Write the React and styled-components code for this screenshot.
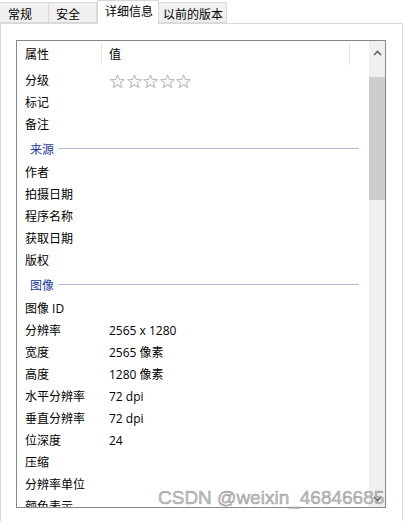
import React from "react";
import styled, { createGlobalStyle } from "styled-components";

const GlobalStyle = createGlobalStyle`
	html, body {
		margin: 0;
		padding: 0;
		background: #fff;
	}
	body {
		font-family: "Open Sans", "Noto Sans CJK SC", sans-serif;
		font-size: 12px;
		color: #000;
	}
`;

const tabs = [
	{ label: "常规", width: 49, pad: 8 },
	{ label: "安全", width: 48, pad: 7 },
	{ label: "详细信息", width: 62, pad: 7, active: true },
	{ label: "以前的版本", width: 68, pad: 4 },
];

const rows = [
	{ label: "分级", stars: true },
	{ label: "标记" },
	{ label: "备注" },
	{ group: "来源" },
	{ label: "作者" },
	{ label: "拍摄日期" },
	{ label: "程序名称" },
	{ label: "获取日期" },
	{ label: "版权" },
	{ group: "图像" },
	{ label: "图像 ID" },
	{ label: "分辨率", value: "2565 x 1280" },
	{ label: "宽度", value: "2565 像素" },
	{ label: "高度", value: "1280 像素" },
	{ label: "水平分辨率", value: "72 dpi" },
	{ label: "垂直分辨率", value: "72 dpi" },
	{ label: "位深度", value: "24" },
	{ label: "压缩" },
	{ label: "分辨率单位" },
	{ label: "颜色表示" },
];

function Star() {
	return (
		<svg width="15" height="15" viewBox="0 0 14 14">
			<polygon
				points="7,0.8 8.7,5 13.3,5.2 9.7,8.1 11,12.6 7,10 3,12.6 4.3,8.1 0.7,5.2 5.3,5"
				fill="#fafafa"
				stroke="#bdbdbd"
				strokeWidth="1"
				strokeLinejoin="round"
			/>
		</svg>
	);
}

function Chevron({ down }) {
	return (
		<svg width="9" height="6" viewBox="0 0 9 6">
			<path
				d={down ? "M1 1 L4.5 4.5 L8 1" : "M1 5 L4.5 1.5 L8 5"}
				fill="none"
				stroke="#606060"
				strokeWidth="1.6"
			/>
		</svg>
	);
}

function App() {
	return (
		<Window>
			<GlobalStyle />
			<TabStrip>
				{tabs.map((t) => (
					<Tab key={t.label} $active={t.active} $width={t.width} $pad={t.pad}>
						{t.label}
					</Tab>
				))}
			</TabStrip>
			<Panel>
				<ListBox>
					<ListMain>
						<Header>
							<HeaderCell $width={85} $pad={8}>属性</HeaderCell>
							<HeaderCell $width={248} $pad={7}>值</HeaderCell>
							<HeaderCell $pad={0} />
						</Header>
						<Rows>
							{rows.map((r, i) =>
								r.group ? (
									<GroupRow key={i}>
										<GroupTitle>{r.group}</GroupTitle>
										<GroupLine />
									</GroupRow>
								) : (
									<Row key={i}>
										<Label>{r.label}</Label>
										<Value>
											{r.stars ? (
												<Stars>
													{[0, 1, 2, 3, 4].map((s) => (
														<Star key={s} />
													))}
												</Stars>
											) : (
												r.value
											)}
										</Value>
									</Row>
								)
							)}
						</Rows>
					</ListMain>
					<ScrollBar>
						<ScrollButton>
							<Chevron />
						</ScrollButton>
						<Track>
							<Thumb />
						</Track>
						<ScrollButton>
							<Chevron down />
						</ScrollButton>
					</ScrollBar>
				</ListBox>
			</Panel>
			<Watermark>CSDN @weixin_46846685</Watermark>
		</Window>
	);
}

export default App;

const Window = styled.div`
	position: relative;
	width: 405px;
	height: 521px;
	overflow: hidden;
	background: #fff;
	display: flex;
	flex-direction: column;
`;

const TabStrip = styled.div`
	display: flex;
	align-items: flex-end;
	height: 23px;
	border-bottom: 1px solid #d9d9d9;
	width: 403px;
	box-sizing: content-box;
`;

const Tab = styled.div`
	box-sizing: border-box;
	width: ${(p) => p.$width}px;
	padding-left: ${(p) => p.$pad}px;
	height: ${(p) => (p.$active ? 24 : 21)}px;
	margin-bottom: ${(p) => (p.$active ? -1 : 0)}px;
	line-height: ${(p) => (p.$active ? 20 : 21)}px;
	background: ${(p) => (p.$active ? "#fff" : "#f0f0f0")};
	border: 1px solid #d9d9d9;
	border-bottom: ${(p) => (p.$active ? "none" : "1px solid #d9d9d9")};
	border-left: ${(p) => (p.$active ? "1px solid #d9d9d9" : "none")};
	font-family: "Noto Sans CJK SC", sans-serif;
	font-size: 12px;
	white-space: nowrap;
`;

const Panel = styled.div`
	flex: 1;
	width: 403px;
	box-sizing: border-box;
	border-left: 1px solid #d9d9d9;
	border-right: 1px solid #d9d9d9;
	padding: 16px 0 0 15px;
`;

const ListBox = styled.div`
	width: 370px;
	height: 468px;
	box-sizing: border-box;
	border: 1px solid #828790;
	display: flex;
	overflow: hidden;
`;

const ListMain = styled.div`
	flex: 1;
	display: flex;
	flex-direction: column;
	overflow: hidden;
`;

const Header = styled.div`
	display: flex;
	height: 24px;
	flex-shrink: 0;
`;

const HeaderCell = styled.div`
	box-sizing: border-box;
	width: ${(p) => (p.$width ? `${p.$width}px` : "auto")};
	flex: ${(p) => (p.$width ? "none" : 1)};
	padding-left: ${(p) => p.$pad}px;
	line-height: 24px;
	border-right: 1px solid #e5e5e5;
	margin: 1px 0 0;
	font-family: "Noto Sans CJK SC", sans-serif;

	&:last-child {
		border-right: none;
	}
`;

const Rows = styled.div`
	display: flex;
	flex-direction: column;
	padding-top: 4px;
`;

const Row = styled.div`
	display: grid;
	grid-template-columns: 85px 1fr;
	height: 22px;
	align-items: center;
	flex-shrink: 0;
`;

const Label = styled.div`
	padding-left: 8px;
	white-space: nowrap;
`;

const Value = styled.div`
	padding-left: 7px;
	white-space: nowrap;
`;

const Stars = styled.div`
	display: flex;
	gap: 1.5px;
	padding-left: 1px;
	padding-top: 2px;
`;

const GroupRow = styled.div`
	display: flex;
	align-items: center;
	height: 26px;
	flex-shrink: 0;
	padding-left: 13px;
	padding-right: 10px;
	gap: 4px;
`;

const GroupTitle = styled.div`
	color: #1e3a9e;
	font-family: "Noto Sans CJK SC", sans-serif;
`;

const GroupLine = styled.div`
	flex: 1;
	height: 1px;
	background: #b4bdd6;
`;

const ScrollBar = styled.div`
	width: 16px;
	flex-shrink: 0;
	background: #f0f0f0;
	display: flex;
	flex-direction: column;
`;

const ScrollButton = styled.div`
	height: 17px;
	display: flex;
	align-items: center;
	justify-content: center;
	flex-shrink: 0;
	padding-top: 3px;
`;

const Track = styled.div`
	flex: 1;
	padding-top: 16px;
`;

const Thumb = styled.div`
	height: 123px;
	background: #cdcdcd;
`;

const Watermark = styled.div`
	position: absolute;
	left: 158px;
	top: 487px;
	font-family: "Liberation Sans", Arial, sans-serif;
	font-size: 19px;
	line-height: 22px;
	color: rgba(195, 195, 195, 0.9);
	-webkit-text-stroke: 0.6px rgba(110, 110, 110, 0.6);
	white-space: nowrap;
`;
